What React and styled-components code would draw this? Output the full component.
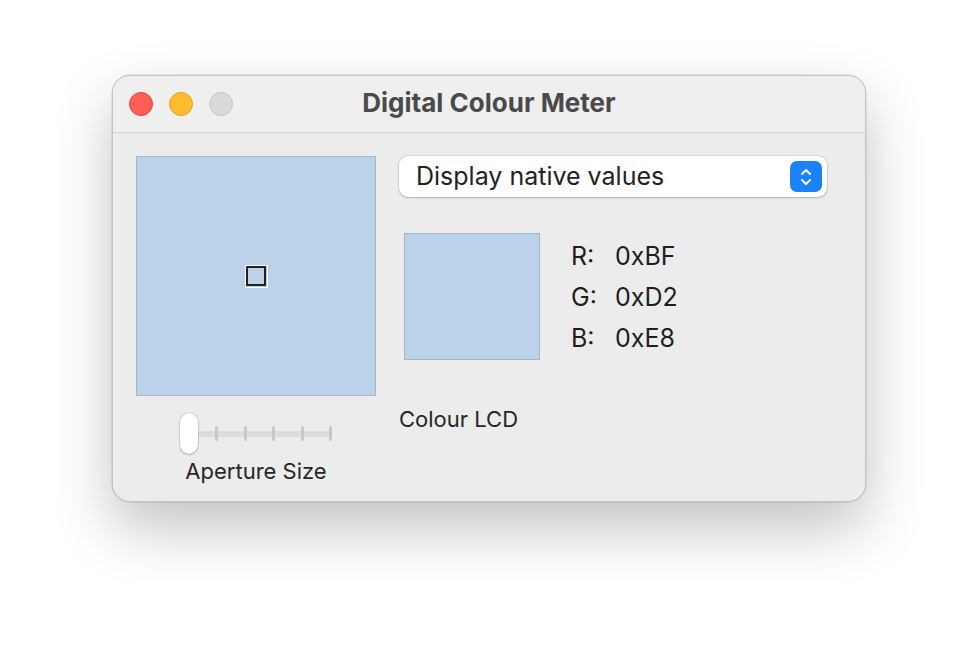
import React from 'react';
import styled, { createGlobalStyle } from 'styled-components';

const GlobalStyle = createGlobalStyle`
    html, body {
        margin: 0;
        padding: 0;
        background: #ffffff;
    }
    body {
        font-family: Inter, "Noto Sans", "Liberation Sans", sans-serif;
        -webkit-font-smoothing: antialiased;
    }
`;

const Page = styled.div`
    width: 978px;
    height: 650px;
    padding: 75px 0 0 112px;
    box-sizing: border-box;
`;

const Window = styled.div`
    width: 754px;
    height: 427px;
    box-sizing: border-box;
    border-radius: 18px;
    background: #ececec;
    border: 1px solid #c4c4c4;
    box-shadow: 0 26px 60px rgba(0, 0, 0, 0.24), 0 0 0 0.5px rgba(0, 0, 0, 0.15);
    overflow: hidden;
    display: flex;
    flex-direction: column;
`;

const TitleBar = styled.div`
    height: 56px;
    flex-shrink: 0;
    background: #efefef;
    border-bottom: 1px solid #d2d2d2;
    display: flex;
    align-items: center;
    padding-left: 16px;
    position: relative;
`;

const Lights = styled.div`
    display: flex;
    gap: 16px;
`;

const Light = styled.span`
    width: 24px;
    height: 24px;
    border-radius: 50%;
    box-sizing: border-box;
    background: ${p => p.$color};
    border: 1px solid ${p => p.$edge};
`;

const Title = styled.div`
    position: absolute;
    left: 0;
    right: 0;
    top: 11px;
    text-align: center;
    font-size: 26px;
    line-height: 32px;
    font-weight: 700;
    color: #4a4a4a;
    pointer-events: none;
`;

const Body = styled.div`
    display: flex;
    gap: 23px;
    padding: 23px 0 0 23px;
`;

const LeftCol = styled.div`
    width: 240px;
    display: flex;
    flex-direction: column;
    align-items: center;
`;

const Preview = styled.div`
    width: 240px;
    height: 240px;
    box-sizing: border-box;
    background: #bcd2e9;
    border: 1.5px solid #a2b6ca;
    display: flex;
    align-items: center;
    justify-content: center;
`;

const Aperture = styled.div`
    width: 23px;
    height: 23px;
    box-sizing: border-box;
    border: 1.5px solid #ffffff;
    display: flex;
    align-items: center;
    justify-content: center;
    &::after {
        content: '';
        width: 20px;
        height: 20px;
        box-sizing: border-box;
        border: 2px solid #222222;
    }
`;

const Slider = styled.div`
    margin-top: 17px;
    width: 152px;
    height: 41px;
    position: relative;
    display: flex;
    align-items: center;
`;

const Track = styled.div`
    margin-left: 12px;
    width: 140px;
    height: 6px;
    background: #dcdcdc;
    border-radius: 3px;
    display: flex;
    justify-content: space-between;
    align-items: center;
    padding: 0 0 0 23px;
    box-sizing: border-box;
`;

const Tick = styled.span`
    width: 3px;
    height: 15px;
    border-radius: 1.5px;
    background: #c8c8c8;
`;

const Knob = styled.div`
    position: absolute;
    left: 0;
    top: 0;
    width: 18px;
    height: 41px;
    border-radius: 9px;
    background: #ffffff;
    box-shadow: 0 0 0 0.5px rgba(0, 0, 0, 0.18), 0 1px 2px rgba(0, 0, 0, 0.2);
`;

const Caption = styled.div`
    margin-top: 4px;
    font-size: 22px;
    color: #262626;
`;

const RightCol = styled.div`
    display: flex;
    flex-direction: column;
`;

const Select = styled.div`
    width: 428px;
    height: 41px;
    box-sizing: border-box;
    background: #ffffff;
    border-radius: 9px;
    box-shadow: 0 0 0 0.5px rgba(0, 0, 0, 0.15), 0 1px 2px rgba(0, 0, 0, 0.18);
    display: flex;
    align-items: center;
    justify-content: space-between;
    padding: 0 5px 2px 17px;
    font-size: 25px;
    color: #222222;
`;

const Stepper = styled.div`
    width: 32px;
    height: 31px;
    margin-top: 2px;
    border-radius: 7px;
    background: #1a82fb;
    display: flex;
    align-items: center;
    justify-content: center;
`;

const ColourRow = styled.div`
    display: flex;
    margin: 36px 0 0 5px;
`;

const Swatch = styled.div`
    width: 136px;
    height: 127px;
    box-sizing: border-box;
    background: #bcd2e9;
    border: 1.5px solid #a2b6ca;
`;

const Values = styled.div`
    margin: 8px 0 0 31px;
    display: grid;
    grid-template-columns: 44px auto;
    grid-auto-rows: 30px;
    row-gap: 11px;
    font-size: 25px;
    line-height: 30px;
    color: #1e1e1e;
`;

const Device = styled.div`
    margin-top: 46px;
    font-size: 22px;
    color: #262626;
`;

const rows = [
    ['R:', '0xBF'],
    ['G:', '0xD2'],
    ['B:', '0xE8'],
];

const App = () => {
    return (
        <>
            <GlobalStyle />
            <Page>
                <Window>
                    <TitleBar>
                        <Lights>
                            <Light $color="#fe5f57" $edge="#e1463f" />
                            <Light $color="#febc2e" $edge="#e0a223" />
                            <Light $color="#d9d9d9" $edge="#c4c4c4" />
                        </Lights>
                        <Title>Digital Colour Meter</Title>
                    </TitleBar>
                    <Body>
                        <LeftCol>
                            <Preview>
                                <Aperture />
                            </Preview>
                            <Slider>
                                <Track>
                                    <Tick />
                                    <Tick />
                                    <Tick />
                                    <Tick />
                                    <Tick />
                                </Track>
                                <Knob />
                            </Slider>
                            <Caption>Aperture Size</Caption>
                        </LeftCol>
                        <RightCol>
                            <Select>
                                <span>Display native values</span>
                                <Stepper>
                                    <svg width="14" height="22" viewBox="0 0 14 22" fill="none">
                                        <path d="M3 8 L7 4 L11 8" stroke="#fff" strokeWidth="2" strokeLinecap="round" strokeLinejoin="round" />
                                        <path d="M3 14 L7 18 L11 14" stroke="#fff" strokeWidth="2" strokeLinecap="round" strokeLinejoin="round" />
                                    </svg>
                                </Stepper>
                            </Select>
                            <ColourRow>
                                <Swatch />
                                <Values>
                                    {rows.map(([k, v]) => (
                                        <React.Fragment key={k}>
                                            <span>{k}</span>
                                            <span>{v}</span>
                                        </React.Fragment>
                                    ))}
                                </Values>
                            </ColourRow>
                            <Device>Colour LCD</Device>
                        </RightCol>
                    </Body>
                </Window>
            </Page>
        </>
    );
};

export default App;
